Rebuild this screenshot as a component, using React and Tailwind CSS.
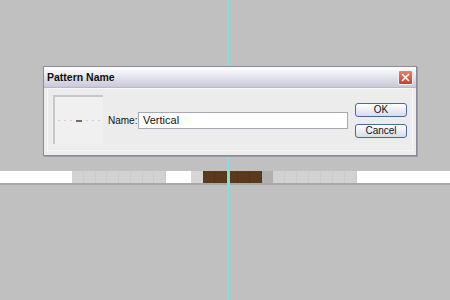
export default function App() {
  return (
    <div className="relative w-[450px] h-[300px] overflow-hidden bg-[#c0c0c0] font-['Liberation_Sans',Arial,sans-serif]">
      {/* canvas strip */}
      <div className="absolute left-0 top-[171px] w-[450px]">
        <div className="flex h-[12px]">
          <div className="w-[72px] bg-white" />
          <div className="flex w-[94px] bg-[#d2d2d2]">
            {Array.from({ length: 8 }).map((_, i) => (
              <div key={i} className="flex-1 border-r border-[#cbcbcb]" />
            ))}
          </div>
          <div className="w-[25px] bg-white" />
          <div className="w-[12px] bg-[#d6d6d6]" />
          <div className="flex w-[59px] bg-[#5a3a1a]">
            {Array.from({ length: 5 }).map((_, i) => (
              <div key={i} className="flex-1 border-r border-[#523518]" />
            ))}
          </div>
          <div className="w-[11px] bg-[#b0b0b0]" />
          <div className="flex w-[84px] bg-[#d2d2d2]">
            {Array.from({ length: 7 }).map((_, i) => (
              <div key={i} className="flex-1 border-r border-[#cbcbcb]" />
            ))}
          </div>
          <div className="flex-1 bg-white" />
        </div>
        <div className="h-[2px] bg-[#a8a8a8]" />
      </div>

      {/* guide */}
      <div className="absolute left-[227px] top-0 h-[300px] w-[2px] bg-[#7fe0dc]" />
      <div className="absolute left-[229px] top-0 h-[300px] w-[1px] bg-[#d0b8c0]" />

      {/* dialog */}
      <div className="absolute left-[43px] top-[66px] w-[374px] h-[90px] border border-[#8a8a9a] bg-[#ececec] shadow-[1px_1px_0_#9a9aa8]">
        <div className="flex items-center justify-between h-[21px] pl-[3px] pr-[3px] pt-[1px] bg-gradient-to-b from-[#ffffff] via-[#e4e4ee] to-[#c8c8d8] border-b border-[#b8b8c8]">
          <span className="text-[10.5px] font-bold text-[#111]">Pattern Name</span>
          <div className="w-[15px] h-[15px] rounded-[2px] bg-gradient-to-b from-[#e8806c] to-[#c4402c] border border-[#f2f2f2] flex items-center justify-center">
            <svg width="9" height="9" viewBox="0 0 9 9">
              <path d="M1 1 L8 8 M8 1 L1 8" stroke="#fff" strokeWidth="1.6" />
            </svg>
          </div>
        </div>
        <div className="flex mx-[3px] mb-[3px] h-[63px] border border-[#f6f6f6] items-start">
          <div className="ml-[5px] mt-[6px] w-[50px] h-[49px] border-l-2 border-t-2 border-[#c8c8c8] bg-[#f0f0f0] flex items-center justify-center">
            <div className="flex items-center gap-[4px]">
              <span className="w-[2px] h-[1px] bg-[#d0d0d0]" />
              <span className="w-[2px] h-[1px] bg-[#d0d0d0]" />
              <span className="w-[2px] h-[1px] bg-[#d0d0d0]" />
              <span className="w-[6px] h-[2px] bg-[#7a6a5a]" />
              <span className="w-[2px] h-[1px] bg-[#d0d0d0]" />
              <span className="w-[2px] h-[1px] bg-[#d0d0d0]" />
              <span className="w-[2px] h-[1px] bg-[#d0d0d0]" />
            </div>
          </div>
          <div className="flex items-center mt-[23px] ml-[5px]">
            <span className="w-[30px] text-[10px] text-[#111]">Name:</span>
            <div className="w-[210px] h-[17px] border border-[#a8a8b0] bg-white flex items-center pl-[4px]">
              <span className="text-[11px] text-[#111]">Vertical</span>
            </div>
          </div>
          <div className="ml-[7px] mt-[14px] flex flex-col gap-[7px]">
            <button className="w-[52px] h-[14px] rounded-[3px] border border-[#4a6a9a] bg-gradient-to-b from-[#ffffff] to-[#d8dce8] text-[10px] leading-none text-[#111]">
              OK
            </button>
            <button className="w-[52px] h-[14px] rounded-[3px] border border-[#4a6a9a] bg-gradient-to-b from-[#ffffff] to-[#d8dce8] text-[10px] leading-none text-[#111]">
              Cancel
            </button>
          </div>
        </div>
      </div>
    </div>
  );
}
